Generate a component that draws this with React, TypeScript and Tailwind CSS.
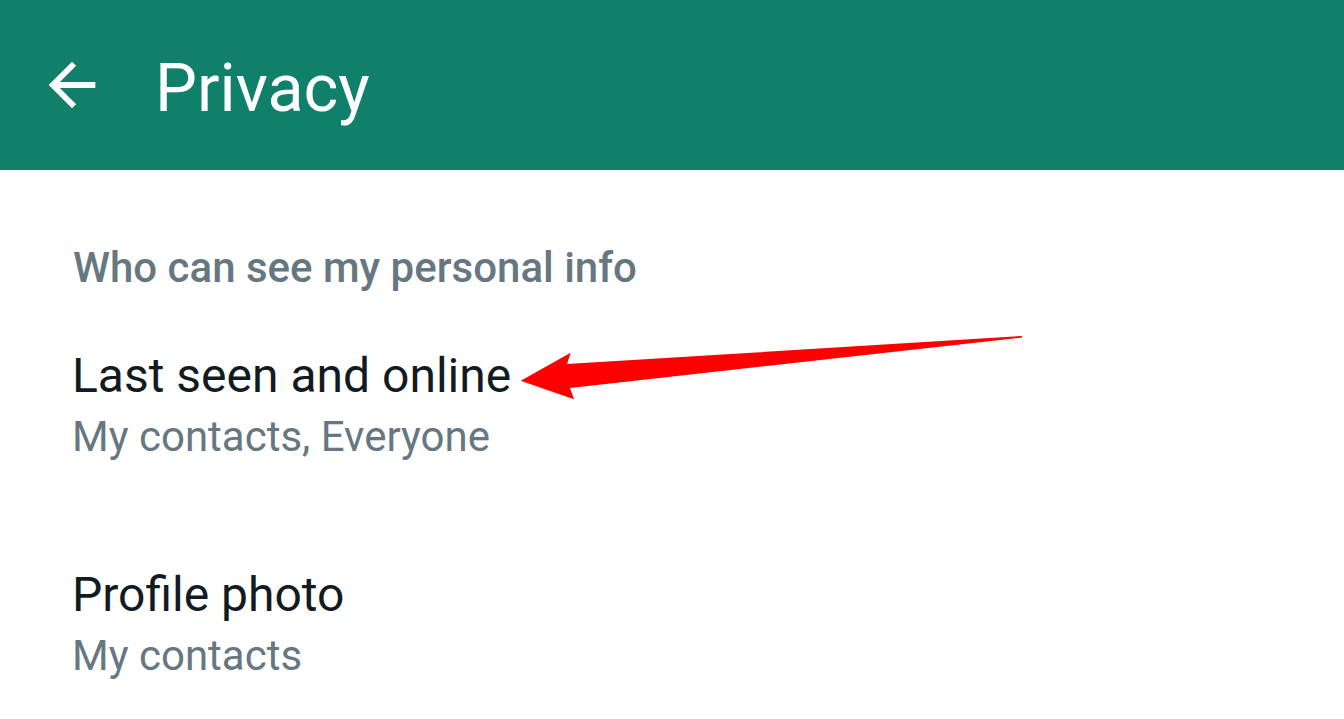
import { ReactNode } from "react";

const font = { fontFamily: "Roboto, 'Noto Sans', sans-serif" };

function SectionLabel({ children }: { children: ReactNode }) {
  return (
    <div className="ml-[1px] text-[42px] leading-none font-medium text-[#667781]">
      {children}
    </div>
  );
}

function SettingRow({
  title,
  value,
  className = "",
}: {
  title: string;
  value: string;
  className?: string;
}) {
  return (
    <div className={`flex flex-col gap-[16px] ${className}`}>
      <div className="text-[48px] leading-none text-[#111b21]">{title}</div>
      <div className="text-[42px] leading-none text-[#667781]">{value}</div>
    </div>
  );
}

export default function App() {
  return (
    <div className="relative h-[719px] w-full overflow-hidden bg-white" style={font}>
      <header className="flex h-[170px] items-center bg-[#11806a] pl-[37px]">
        <svg viewBox="0 0 24 24" className="h-[70px] w-[70px] fill-white">
          <path d="M20 11H7.83l5.59-5.59L12 4l-8 8 8 8 1.41-1.41L7.83 13H20v-2z" />
        </svg>
        <h1 className="ml-[48px] pt-[7px] text-[66.5px] leading-none font-normal text-white">
          Privacy
        </h1>
      </header>

      <main className="flex flex-col pl-[72px] pt-[77px]">
        <SectionLabel>Who can see my personal info</SectionLabel>
        <SettingRow className="mt-[63px]" title="Last seen and online" value="My contacts, Everyone" />
        <SettingRow className="mt-[113px]" title="Profile photo" value="My contacts" />
      </main>

      {/* red annotation arrow */}
      <svg
        className="pointer-events-none absolute left-0 top-0 h-[719px] w-[1344px]"
        viewBox="0 0 1344 719"
      >
        <polygon
          fill="#ff0000"
          points="520.7,380.7 570.7,352.7 567,364 1022,336 1022,337.6 570,388 574,399.3"
        />
      </svg>
    </div>
  );
}
